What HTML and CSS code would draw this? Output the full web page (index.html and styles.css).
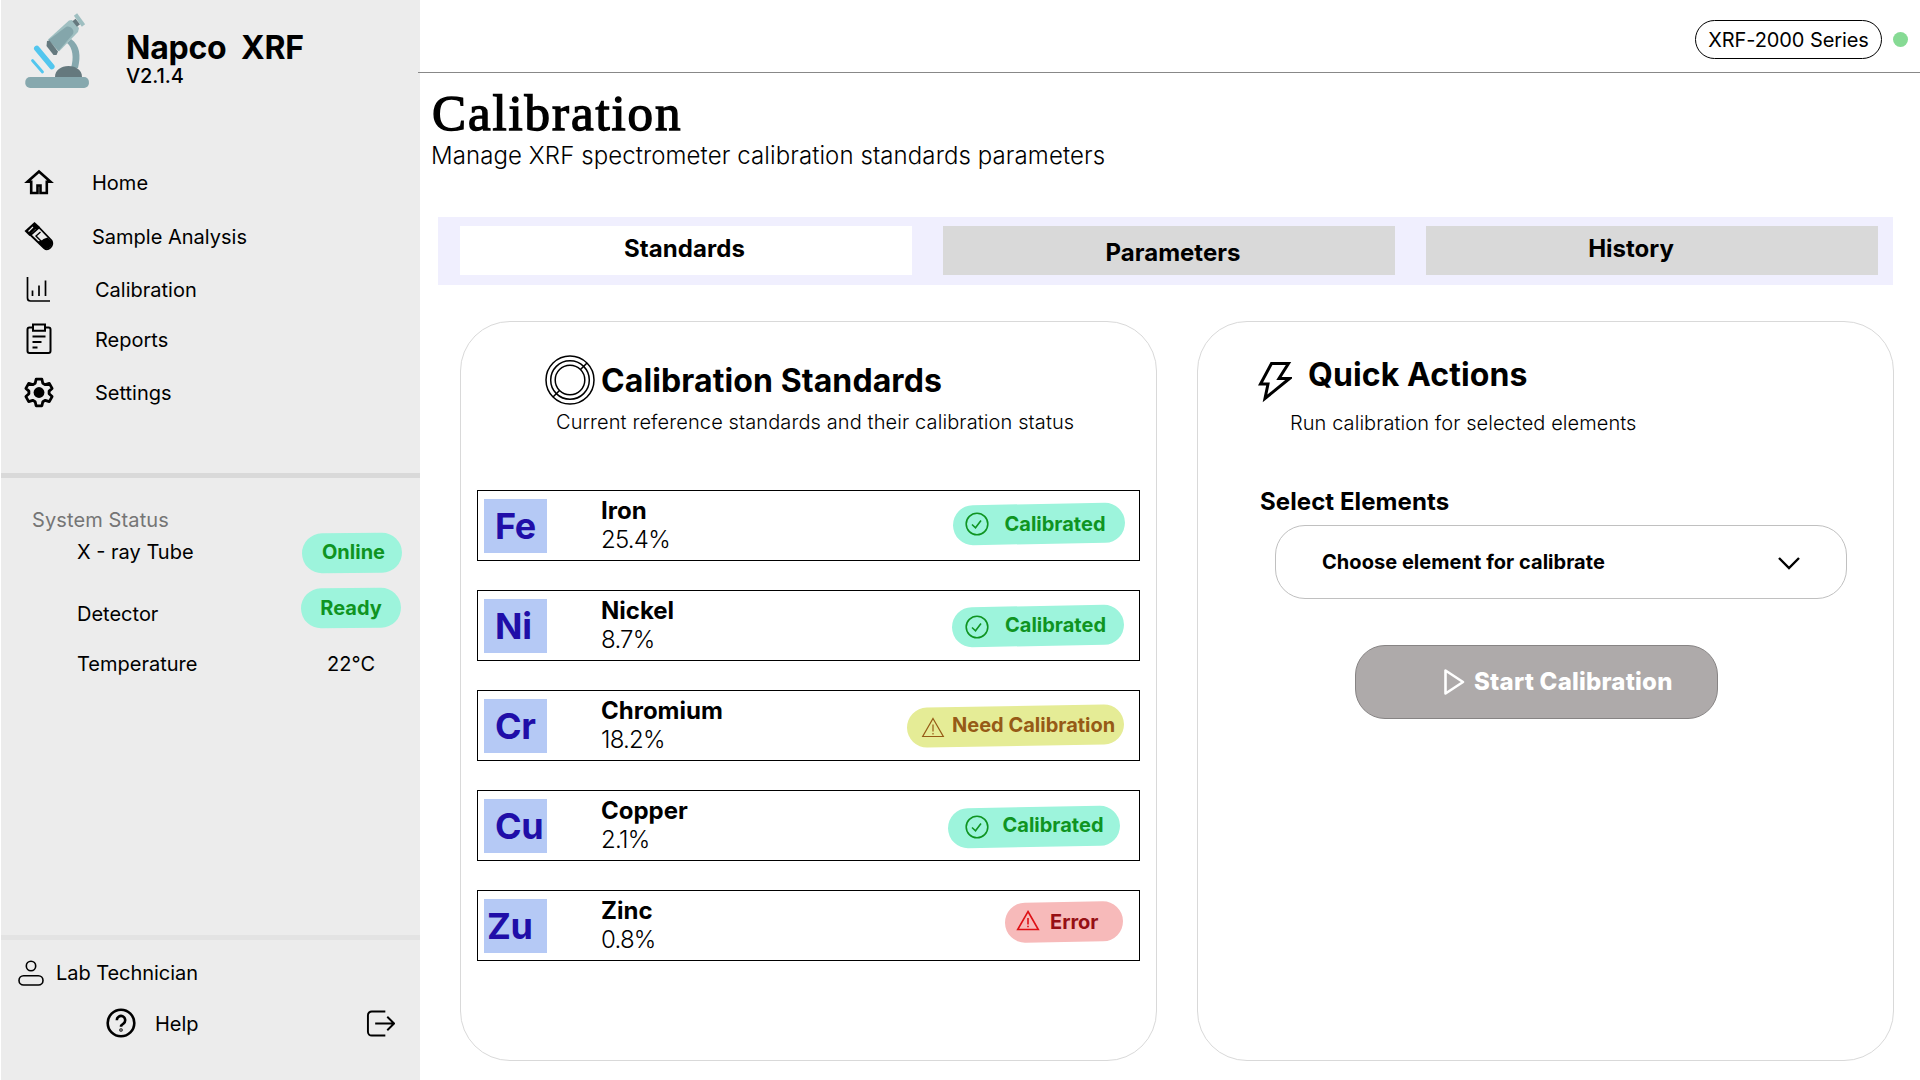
FILE: index.html
```html
<!DOCTYPE html>
<html lang="en">
<head>
<meta charset="utf-8">
<title>Napco XRF – Calibration</title>
<link rel="stylesheet" href="styles.css">
</head>
<body>
<div class="app">
  <aside class="sidebar">
    <div class="brand">
      <svg class="brand-logo" viewBox="25 13 64 76">
        <path d="M67 43c6 5 7 15 4 25h7c3-12 2-23-7-29z" fill="#86a8ae"/>
        <path d="M55 77c0-7 6-11 13.500-11s13.500 4 13.500 11z" fill="#65797e"/>
        <rect x="25.300" y="77" width="63.600" height="11" rx="4.800" fill="#86a8ae"/>
        <path d="M69 20.500l3-.5 7 8-1 4-19 19.500-11-12z" fill="#9fbfc1"/>
        <path d="M66 27c4-2 9 3 7 7L58.500 51 48.500 40z" fill="#84a6ab"/>
        <path d="M47 41l2.500-.5 8.500 11-1.500 3.500h-3l-7-9z" fill="#65797e"/>
        <path d="M74 20l4.500 5.500" stroke="#65797e" stroke-width="4"/>
        <path d="M75.500 14.500l8 11" stroke="#9fbfc1" stroke-width="4"/>
        <path d="M36.800 48.500l15 18" stroke="#52c6ee" stroke-width="5.600" stroke-linecap="round"/>
        <path d="M32.500 60.500l10 11.500" stroke="#52c6ee" stroke-width="2.800" stroke-linecap="round"/>
      </svg>
      <div class="brand-text">
        <div class="brand-name">Napco&nbsp; XRF</div>
        <div class="brand-version">V2.1.4</div>
      </div>
    </div>
    <nav class="nav">
      <a class="nav-item"><svg class="icon" viewBox="0 0 32 32"><path d="M16 5.500L4.500 15.800h3.700V27h6.300v-7.500h3V27h6.300V15.800h3.700z" fill="none" stroke="#000" stroke-width="2.600"/></svg><span>Home</span></a>
      <a class="nav-item"><svg class="icon" viewBox="0 0 32 32"><path d="M1.500 11L11.500 2l5 4.500L6.500 16z"/><path d="M5.500 11.500l4.500-4.500M9 13.500l4-4" stroke="#ececec" stroke-width="1.200"/><path d="M7.500 15l13.500 13c4 3.500 10.500-2 7.500-7.500L16 7.500z" fill="#ececec" stroke="#000" stroke-width="1.800"/><path d="M14.500 21.500c2-.5 4-.5 6-2.500l4-1.500 4.500 4c1 5-4.500 9-8.500 6.500z"/><path d="M17.500 12l-4.500 4 5.500 5.500" fill="none" stroke="#000" stroke-width="1.400"/></svg><span>Sample Analysis</span></a>
      <a class="nav-item shifted"><svg class="icon" viewBox="0 0 32 32"><path d="M4.500 4v21q0 3 3 3H27M9.500 17.500V23M16 12.500V23M22.500 7.500V23" fill="none" stroke="#000" stroke-width="1.700"/></svg><span>Calibration</span></a>
      <a class="nav-item shifted"><svg class="icon" viewBox="0 0 32 32"><path d="M10 4.500H6.500a2 2 0 0 0-2 2V28a2 2 0 0 0 2 2h19a2 2 0 0 0 2-2V6.500a2 2 0 0 0-2-2H22M10 1.500h12v6.300H10zM9.500 13.500h13M9.500 19h9M9.500 24.500h5" fill="none" stroke="#000" stroke-width="2"/></svg><span>Reports</span></a>
      <a class="nav-item shifted"><svg class="icon" viewBox="0 0 32 32"><path d="M13.100 3.200h5.800l.9 4.100 2.500 1.400 4-1.300 2.800 5-3 2.700v2.700l3 2.800-2.800 5-4-1.300-2.500 1.400-.9 4.100h-5.800l-.9-4.100-2.500-1.400-4 1.300-2.800-5 3-2.800v-2.700l-3-2.700 2.800-5 4 1.300 2.500-1.400z" fill="none" stroke="#000" stroke-width="2.800" stroke-linejoin="round"/><circle cx="16" cy="16.500" r="5.400"/></svg><span>Settings</span></a>
    </nav>
    <section class="status">
      <h2 class="status-title">System Status</h2>
      <div class="status-row"><span>X - ray Tube</span><span class="badge online"><b>Online</b></span></div>
      <div class="status-row detector"><span>Detector</span><span class="badge ready"><b>Ready</b></span></div>
      <div class="status-row"><span>Temperature</span><span class="temp">22°C</span></div>
    </section>
    <footer class="account">
      <div class="user"><svg viewBox="0 0 28 28"><circle cx="14" cy="7" r="4.700"/><rect x="2" y="16.800" width="24" height="9.200" rx="4.600"/></svg><span>Lab Technician</span></div>
      <div class="help"><svg class="help-icon" viewBox="0 0 30 30"><circle cx="15" cy="15" r="13.300"/><path d="M10.800 12.200a4.200 4.200 0 1 1 6.600 3.400q-2.400 1.500-2.400 3.200"/><circle cx="15" cy="22" r=".5"/></svg><span>Help</span><svg class="logout" viewBox="0 0 30 30"><path d="M20 2.500H6a4 4 0 0 0-4 4v17a4 4 0 0 0 4 4h14M9.500 15h19M22 8l7 7-7 7"/></svg></div>
    </footer>
  </aside>

  <main class="main">
    <header class="topbar">
      <span class="device">XRF-2000 Series</span><span class="dot"></span>
    </header>
    <div class="heading">
      <h1 class="title">Calibration</h1>
      <p class="subtitle">Manage XRF spectrometer calibration standards parameters</p>
    </div>
    <div class="tabs">
      <div class="tab active">Standards</div>
      <div class="tab parameters">Parameters</div>
      <div class="tab history">History</div>
    </div>
    <div class="cards">
      <section class="card standards">
        <div class="card-head">
          <svg class="ring" viewBox="0 0 50 50"><circle cx="25" cy="25" r="24"/><circle cx="25" cy="25" r="19.300"/><circle cx="25" cy="25" r="14.800"/><path d="M42 8l-6.500 6.500M8 42l6.500-6.500"/></svg>
          <h2>Calibration Standards</h2>
        </div>
        <p class="card-sub">Current reference standards and their calibration status</p>
        <div class="rows">
          <div class="row"><div class="symbol">Fe</div><div class="info"><b>Iron</b><span>25.4%</span></div>
            <div class="badge ok fe"><svg viewBox="0 0 24 24"><circle cx="12" cy="12" r="10.800"/><path d="M7 12.500l3.500 3.300L16 8.500"/></svg><b>Calibrated</b></div></div>
          <div class="row"><div class="symbol">Ni</div><div class="info"><b>Nickel</b><span>8.7%</span></div>
            <div class="badge ok ni"><svg viewBox="0 0 24 24"><circle cx="12" cy="12" r="10.800"/><path d="M7 12.500l3.500 3.300L16 8.500"/></svg><b>Calibrated</b></div></div>
          <div class="row"><div class="symbol">Cr</div><div class="info"><b>Chromium</b><span>18.2%</span></div>
            <div class="badge warn"><svg viewBox="0 0 24 24"><path d="M12 3.500L22.300 21.500H1.700zM12 9.500v7M12 18v1.500"/></svg><b>Need Calibration</b></div></div>
          <div class="row"><div class="symbol">Cu</div><div class="info"><b>Copper</b><span>2.1%</span></div>
            <div class="badge ok cu"><svg viewBox="0 0 24 24"><circle cx="12" cy="12" r="10.800"/><path d="M7 12.500l3.500 3.300L16 8.500"/></svg><b>Calibrated</b></div></div>
          <div class="row"><div class="symbol zu">Zu</div><div class="info"><b>Zinc</b><span>0.8%</span></div>
            <div class="badge error"><svg viewBox="0 0 24 24"><path d="M12 3.500L22.300 21.500H1.700zM12 10v6.500M12 17.800v1.500"/></svg><b>Error</b></div></div>
        </div>
      </section>
      <section class="card actions">
        <div class="card-head">
          <svg class="bolt" viewBox="0 0 34 42"><path d="M13.500 2.500h17l-9.500 15h10.500L7 37.500 10 23H2.500z"/></svg>
          <h2>Quick Actions</h2>
        </div>
        <p class="card-sub">Run calibration for selected elements</p>
        <h3 class="field-label">Select Elements</h3>
        <div class="select"><span>Choose element for calibrate</span><svg viewBox="0 0 24 14"><path d="M2 2l10 10L22 2"/></svg></div>
        <div class="start"><svg viewBox="0 0 22 28"><path d="M2.500 2.500v23L20 14z"/></svg><span>Start Calibration</span></div>
      </section>
    </div>
  </main>
</div>
</body>
</html>
```
FILE: styles.css
```css
* { box-sizing: border-box; }
body { margin: 0; background: #fff; color: #000; font-family: Inter, "Liberation Sans", sans-serif; font-size: 20px; line-height: 24px; }
h1, h2, h3, p { margin: 0; }
svg { flex: none; }
.app { display: flex; width: 1920px; height: 1080px; overflow: hidden; white-space: nowrap; }

/* Sidebar */
.sidebar { width: 420px; flex: none; display: flex; flex-direction: column; background: #ececec; border-left: 1px solid #fff; }
.brand { display: flex; height: 156px; padding: 13px 0 0 24px; }
.brand-logo { width: 64px; height: 76px; }
.brand-text { padding: 15px 0 0 37px; }
.brand-name { font-size: 32px; font-weight: 700; line-height: 39px; letter-spacing: -.25px; }
.brand-version { margin-top: -3px; font-weight: 500; letter-spacing: -.1px; }
.nav { display: grid; grid-template-rows: 54px 54px 52px 48px 58px; height: 317px; }
.nav-item { display: flex; align-items: center; padding-left: 21.500px; gap: 37.500px; }
.nav-item.shifted { gap: 40.500px; }
.icon { width: 32px; height: 32px; margin-top: -2px; }
.status { height: 467px; border-top: 5px solid #d9d9d9; border-bottom: 5px solid #e3e3e3; padding-top: 30px; }
.status-title { padding-left: 31px; font-size: 20px; font-weight: 400; color: #757575; letter-spacing: .12px; }
.status-row { display: flex; justify-content: space-between; align-items: center; height: 40px; padding: 0 18px 0 76px; }
.status-row.detector { height: 84px; }
.temp { margin-right: 27px; }
.status-row:last-child { height: 16px; }
.account { padding: 20px 24px 0 17px; }
.user { display: flex; align-items: center; gap: 10px; height: 26px; letter-spacing: -.05px; }
.user svg { width: 28px; height: 28px; margin: -1px 0 0 -1px; padding-right: 0; fill: none; stroke: #000; stroke-width: 1.600; }
.user span { padding-left: 1px; }
.help { display: flex; align-items: center; height: 28px; margin-top: 24px; padding-left: 88px; }
.help-icon { width: 30px; height: 30px; margin: -2px 19px 0 0; fill: none; stroke: #000; stroke-width: 2.600; }
.logout { width: 29px; height: 29px; margin: -2px 1px 0 auto; fill: none; stroke: #000; stroke-width: 2; }

/* Tilted status pills */
.badge { position: relative; z-index: 0; display: flex; align-items: center; height: 40px; color: #0f9422; }
.badge::before { content: ""; position: absolute; z-index: -1; inset: 0; border-radius: 20px; background: #9df4dc; transform: rotate(-1deg); }
.badge b { font-weight: 700; }
.online, .ready { width: 100px; justify-content: center; }
.online::before, .ready::before { transform: rotate(-.6deg); }
.online { padding-left: 3px; }
.online::before { top: 1px; bottom: -1px; }
.ready { margin: 0 1px 12px 0; }

/* Main column */
.main { flex: 1; min-width: 0; }
.topbar { display: flex; justify-content: flex-end; align-items: center; height: 73px; margin-left: -2px; padding: 6px 12px 0 0; border-bottom: 1px solid #888; position: relative; }
.device { width: 187px; height: 39px; border: 1px solid #000; border-radius: 20px; text-align: center; line-height: 38px; letter-spacing: -.1px; }
.dot { width: 15px; height: 15px; margin-left: 11px; border-radius: 50%; background: #86da94; }
.heading { height: 144px; padding: 11px 0 0 11px; }
.title { padding-left: 1px; font: 400 51px/58px "Liberation Serif", serif; letter-spacing: 1.900px; -webkit-text-stroke: 1.400px #000; }
.subtitle { font-size: 24px; font-weight: 300; line-height: 29px; margin-top: -1px; letter-spacing: .09px; }
.tabs { display: grid; grid-template-columns: repeat(3, 452px); gap: 31px; width: 1455px; height: 68px; margin-left: 18px; padding: 9px 15px 10px 22px; background: #f0effe; }
.tab { padding-top: 8px; background: #d9d9d9; text-align: center; font-size: 24px; font-weight: 700; line-height: 29px; }
.tab.active { background: #fff; padding-right: 3px; letter-spacing: .1px; }
.tab.parameters { padding: 12px 0 0 8px; }
.tab.history { padding-right: 42px; }
.cards { display: grid; grid-template-columns: 697px 697px; gap: 40px; margin: 36px 0 0 40px; }
.card { height: 740px; border: 1px solid #d9d9d9; border-radius: 50px; }
.card-head { display: flex; }
.card h2 { font-size: 32px; font-weight: 700; line-height: 39px; letter-spacing: .1px; }
.card-sub { font-weight: 300; letter-spacing: .11px; }

/* Calibration standards */
.standards { padding: 33px 16px 0; }
.standards .card-head { height: 56px; padding-left: 68px; gap: 6px; }
.standards h2 { padding-top: 6px; }
.ring { width: 50px; height: 50px; fill: none; stroke: #000; stroke-width: 1.500; }
.standards .card-sub { padding-left: 79px; margin-top: -1px; }
.rows { display: grid; gap: 29px; margin-top: 56px; }
.row { display: flex; height: 71px; border: 1px solid #000; padding: 8px 14px 0 6px; }
.symbol { width: 63px; height: 54px; background: #b5c9f5; padding-left: 11px; color: #200ea8; font-size: 36px; font-weight: 700; line-height: 54px; letter-spacing: -.3px; }
.symbol.zu { padding-left: 3px; }
.info { display: flex; flex-direction: column; margin: -3px auto 0 54px; font-size: 24px; line-height: 29px; }
.info b { font-weight: 700; }
.info span { font-weight: 300; letter-spacing: -.75px; }
.row .badge { margin-top: 5px; gap: 16px; padding-left: 11.500px; width: 172px; }
.row .badge svg { width: 24px; height: 24px; fill: none; stroke: currentColor; stroke-width: 1.600; }
.row .badge.ni { margin: 7px 1px 0 0; padding: 0 0 3px 13px; }
.row .badge.ni svg { margin-top: 5px; }
.row .badge.cu { margin: 8px 5px 0 0; padding: 0 0 4px 17px; gap: 13.500px; }
.row .badge.cu svg { margin-top: 4px; }
.row .badge.warn { width: 217px; margin: 7px 1px 0 0; padding: 0 0 2px 14px; gap: 7px; color: #965a16; }
.row .badge.warn svg { margin-top: 4px; stroke-width: 1.200; }
.badge.warn::before { background: #e5ec96; }
.row .badge.error { width: 118px; margin: 3px 2px 0 0; padding-left: 11px; gap: 10px; color: #960f14; }
.row .badge.error svg { margin-top: -5px; stroke: #de1015; }
.badge.error::before { background: #f7baba; }

/* Quick actions */
.actions { padding-top: 34px; }
.actions .card-head { height: 56px; padding-left: 60px; }
.bolt { width: 34px; height: 42px; margin-top: 5px; fill: none; stroke: #000; stroke-width: 3; }
.actions h2 { padding-left: 16px; margin-top: -1px; }
.actions .card-sub { padding-left: 92px; margin-top: -1px; letter-spacing: .07px; }
.field-label { margin: 52px 0 0 62px; font-size: 24px; font-weight: 700; line-height: 29px; letter-spacing: .08px; }
.select { display: flex; justify-content: space-between; align-items: center; width: 572px; height: 74px; margin: 9px 0 0 77px; padding: 0 45px 0 46px; border: 1px solid #c0c0c0; border-radius: 30px; font-weight: 700; letter-spacing: .04px; }
.select svg { width: 24px; height: 14px; margin-top: 1px; fill: none; stroke: #000; stroke-width: 2.400; }
.start { display: flex; align-items: center; width: 363px; height: 74px; margin: 46px 0 0 157px; padding-left: 87px; gap: 9px; border: 1px solid #878484; border-radius: 30px; background: #aeaaaa; color: #fff; font-size: 24px; font-weight: 800; letter-spacing: .22px; }
.start svg { width: 22px; height: 28px; fill: none; stroke: #fff; stroke-width: 2.600; stroke-linejoin: round; }
```
